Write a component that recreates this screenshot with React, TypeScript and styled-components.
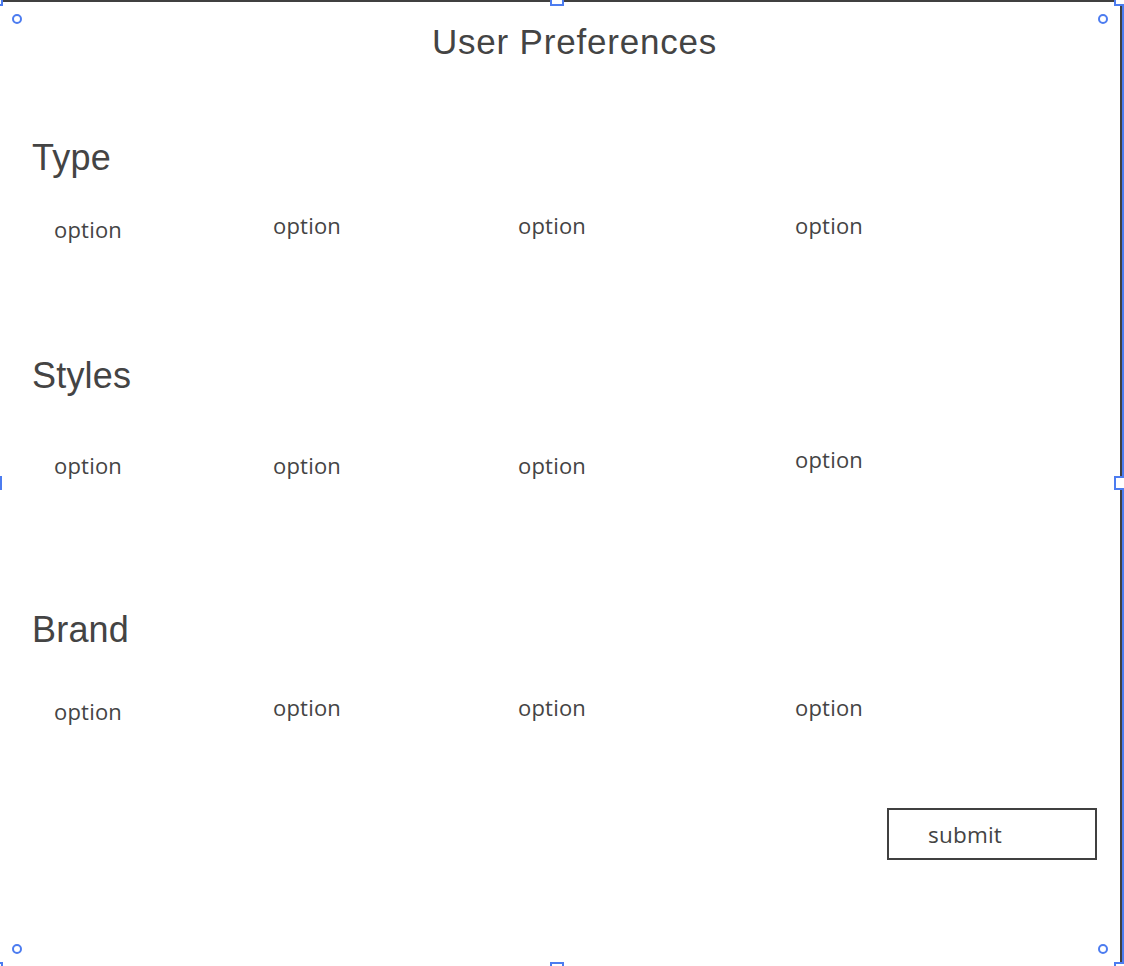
import styled, { createGlobalStyle } from "styled-components";

const GlobalStyle = createGlobalStyle`
  html, body {
    margin: 0;
    padding: 0;
    background: #ffffff;
    overflow: hidden;
  }
  body {
    font-family: "Liberation Sans", Arial, sans-serif;
    color: #444444;
  }
`;

const Frame = styled.div`
  position: relative;
  box-sizing: border-box;
  width: 1122px;
  height: 966px;
  border-top: 2px solid #404040;
  border-right: 2px solid #404040;
  box-shadow: 2px 0 0 #4c7cf0;
  background: #ffffff;
  display: flex;
  flex-direction: column;
`;

const Title = styled.h1`
  margin: -2px 0 0;
  padding-left: 29px;
  height: 84px;
  line-height: 84px;
  text-align: center;
  font-size: 35px;
  font-weight: 400;
  letter-spacing: 0.8px;
`;

const Section = styled.section<{ $top: number; $gap: number }>`
  margin-top: ${(p) => p.$top}px;
  display: flex;
  flex-direction: column;
  gap: ${(p) => p.$gap}px;
`;

const Heading = styled.h2`
  margin: 0;
  padding-left: 32px;
  height: 48px;
  line-height: 48px;
  font-size: 36px;
  font-weight: 400;
  letter-spacing: 0.2px;
`;

const Options = styled.div`
  display: grid;
  grid-template-columns: 219px 245px 277px 1fr;
  padding-left: 54px;
  height: 32px;
`;

const Option = styled.span<{ $nudge?: number }>`
  font-family: "Open Sans", "Liberation Sans", sans-serif;
  font-size: 22px;
  line-height: 30px;
  letter-spacing: 0.2px;
  transform: translateY(${(p) => p.$nudge ?? 0}px);
`;

const Footer = styled.div`
  margin-top: 84px;
  display: flex;
  justify-content: flex-end;
  padding-right: 23px;
`;

const SubmitButton = styled.button`
  box-sizing: border-box;
  width: 210px;
  height: 52px;
  padding: 0 0 0 39px;
  border: 2px solid #404040;
  background: #ffffff;
  color: #444444;
  font-family: "Open Sans", "Liberation Sans", sans-serif;
  font-size: 22.5px;
  letter-spacing: 0.2px;
  text-align: left;
  cursor: pointer;
`;

const Dot = styled.span<{ $x: number; $y: number }>`
  position: absolute;
  left: ${(p) => p.$x - 5}px;
  top: ${(p) => p.$y - 5}px;
  width: 10px;
  height: 10px;
  box-sizing: border-box;
  border: 2px solid #4c7cf0;
  border-radius: 50%;
  background: #ffffff;
`;

const Grip = styled.span<{ $x: number; $y: number }>`
  position: absolute;
  left: ${(p) => p.$x}px;
  top: ${(p) => p.$y}px;
  width: 14px;
  height: 14px;
  box-sizing: border-box;
  border: 2px solid #4c7cf0;
  background: #ffffff;
`;

const sections = [
  { name: "Type", top: 50, gap: 28, nudges: [4, 0, 0, 0] },
  { name: "Styles", top: 110, gap: 50, nudges: [0, 0, 0, -6] },
  { name: "Brand", top: 124, gap: 38, nudges: [4, 0, 0, 0] },
];

const dots = [
  [17, 17],
  [1103, 17],
  [17, 947],
  [1103, 947],
];

const grips = [
  [-11, -10],
  [550, -10],
  [1114, -10],
  [-12, 474],
  [1114, 474],
  [-11, 960],
  [550, 960],
  [1114, 960],
];

export default function App() {
  return (
    <>
      <GlobalStyle />
      <Frame>
        <Title>User Preferences</Title>
        {sections.map((s) => (
          <Section key={s.name} $top={s.top} $gap={s.gap}>
            <Heading>{s.name}</Heading>
            <Options>
              {s.nudges.map((n, i) => (
                <Option key={i} $nudge={n}>
                  option
                </Option>
              ))}
            </Options>
          </Section>
        ))}
        <Footer>
          <SubmitButton>submit</SubmitButton>
        </Footer>
        {dots.map(([x, y], i) => (
          <Dot key={i} $x={x} $y={y} />
        ))}
        {grips.map(([x, y], i) => (
          <Grip key={i} $x={x} $y={y} />
        ))}
      </Frame>
    </>
  );
}
